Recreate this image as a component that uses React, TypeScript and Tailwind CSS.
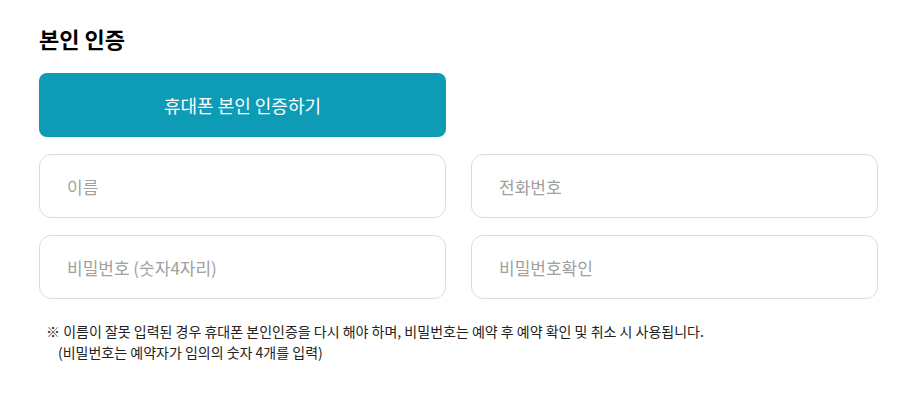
export default function App() {
  const fields = ["이름", "전화번호", "비밀번호 (숫자4자리)", "비밀번호확인"];
  return (
    <div
      className="w-[919px] h-[415px] bg-white px-[39px] pt-[22px]"
      style={{ fontFamily: '"Noto Sans CJK KR", "Noto Sans", sans-serif' }}
    >
      <h2 className="text-[22px] font-bold leading-[32px] text-black">본인 인증</h2>

      <button className="mt-[19px] flex h-[64px] w-[407px] items-center justify-center rounded-[8px] bg-[#0e9bb6] text-[18px] text-white">
        휴대폰 본인 인증하기
      </button>

      <div className="mt-[17px] grid w-[839px] grid-cols-2 gap-x-[25px] gap-y-[17px]">
        {fields.map((f) => (
          <input
            key={f}
            placeholder={f}
            className="h-[64px] rounded-[12px] border border-[#dcdcdc] px-[27px] text-[17px] text-[#333] placeholder:text-[#a0a0a0] outline-none"
          />
        ))}
      </div>

      <div className="mt-[22px] pl-[7px] text-[14px] leading-[21px] text-[#222]">
        <p>※ 이름이 잘못 입력된 경우 휴대폰 본인인증을 다시 해야 하며, 비밀번호는 예약 후 예약 확인 및 취소 시 사용됩니다.</p>
        <p className="pl-[12px]">(비밀번호는 예약자가 임의의 숫자 4개를 입력)</p>
      </div>
    </div>
  );
}
